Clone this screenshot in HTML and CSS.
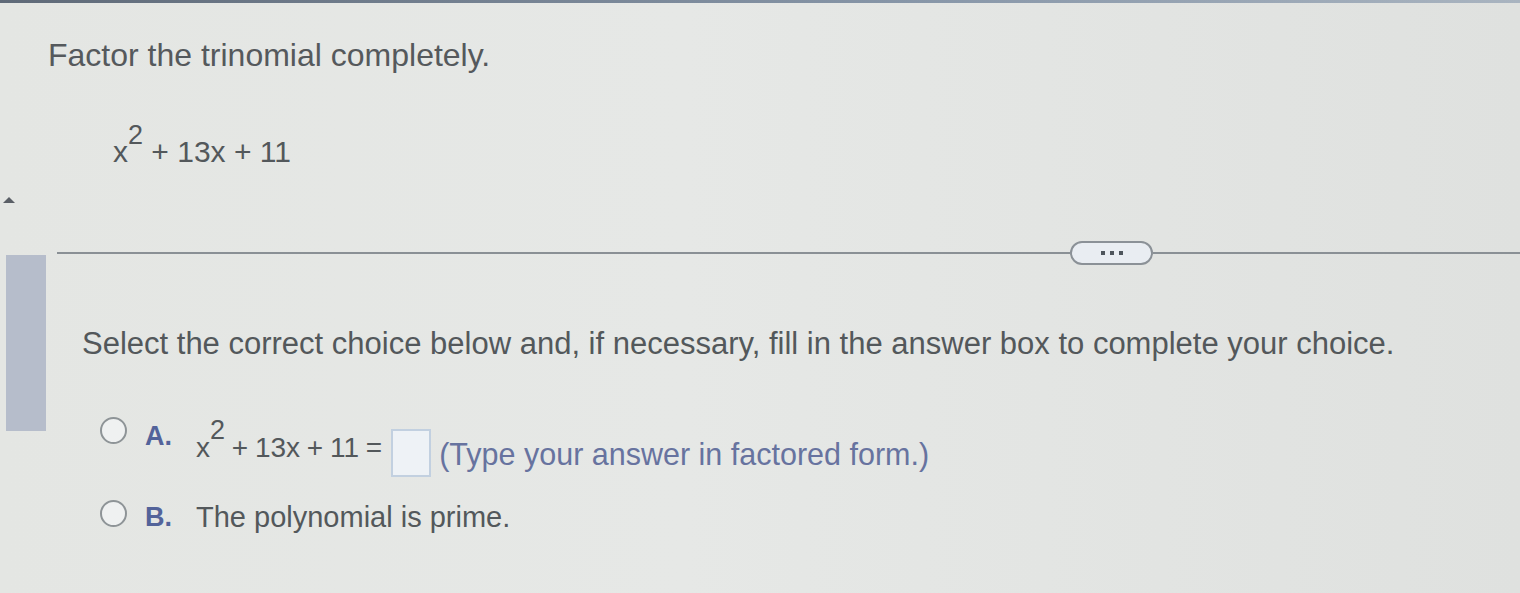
FILE: index.html
```html
<!DOCTYPE html>
<html lang="en">
<head>
<meta charset="utf-8">
<title>Factor the trinomial</title>
<link rel="stylesheet" href="styles.css">
</head>
<body>
<div class="topbar"></div>
<div class="layout">
  <aside class="rail">
    <div class="arrow"></div>
    <div class="thumb"></div>
  </aside>
  <main class="main">
    <section class="question">
      <h1 class="prompt">Factor the trinomial completely.</h1>
      <div class="expr-line">x<sup class="pow">2</sup> + 13x + 11</div>
    </section>
    <div class="divider">
      <span class="rule rule-left"></span>
      <button class="more" type="button"><span class="dot"></span><span class="dot"></span><span class="dot"></span></button>
      <span class="rule rule-right"></span>
    </div>
    <section class="answer">
      <p class="instr">Select the correct choice below and, if necessary, fill in the answer box to complete your choice.</p>
      <ul class="choices">
        <li class="choice choice-a">
          <span class="radio"></span>
          <span class="label">A.</span>
          <span class="content">
            <span class="eq">x<sup class="pow">2</sup> + 13x + 11 =</span>
            <span class="box"></span>
            <span class="hint">(Type your answer in factored form.)</span>
          </span>
        </li>
        <li class="choice choice-b">
          <span class="radio"></span>
          <span class="label">B.</span>
          <span class="text">The polynomial is prime.</span>
        </li>
      </ul>
    </section>
  </main>
</div>
</body>
</html>
```

FILE: styles.css
```css
html, body {
  margin: 0;
  height: 100%;
}
body {
  background: linear-gradient(90deg, #e4e6e3 0%, #e6e8e6 45%, #dfe1df 100%);
  font-family: "Liberation Sans", Arial, sans-serif;
  color: #53585b;
  overflow: hidden;
}
.topbar {
  height: 3px;
  background: linear-gradient(90deg, #5f6a78, #8796a8 60%, #a9b4c0);
}
.layout {
  display: flex;
}
.rail {
  width: 48px;
  flex: none;
  display: flex;
  flex-direction: column;
  padding-top: 194px;
}
.arrow {
  width: 0;
  height: 0;
  margin-left: 3px;
  border-left: 6px solid transparent;
  border-right: 6px solid transparent;
  border-bottom: 6px solid #5a5f66;
}
.thumb {
  margin-top: 52px;
  margin-left: 6px;
  width: 40px;
  height: 176px;
  background: #b6bdcb;
}
.main {
  flex: 1;
  padding-top: 34px;
}
.prompt {
  margin: 0;
  font-size: 32px;
  font-weight: 400;
  line-height: 36px;
  color: #55595c;
}
.expr-line {
  margin: 62px 0 0 65px;
  font-size: 30px;
  line-height: 34px;
  color: #53585b;
}
.pow {
  font-size: 27px;
  line-height: 0;
  vertical-align: 18px;
}
.divider {
  display: flex;
  align-items: center;
  margin: 72px 0 0 9px;
  height: 24px;
}
.rule {
  height: 2px;
  background: #8a9095;
}
.rule-left {
  width: 1013px;
  flex: none;
}
.rule-right {
  flex: 1;
}
.more {
  width: 83px;
  height: 24px;
  flex: none;
  box-sizing: border-box;
  border: 2px solid #8b9197;
  border-radius: 12px;
  background: #e9edf2;
  padding: 0;
  display: flex;
  align-items: center;
  justify-content: center;
  gap: 5px;
}
.dot {
  width: 4px;
  height: 4px;
  background: #4e555c;
}
.instr {
  margin: 62px 0 0 34px;
  font-size: 31px;
  line-height: 34px;
  color: #53585b;
}
.choices {
  list-style: none;
  margin: 52px 0 0 52px;
  padding: 0;
}
.choice {
  display: flex;
  align-items: flex-start;
}
.radio {
  flex: none;
  width: 27px;
  height: 27px;
  box-sizing: border-box;
  border: 2px solid #8e9497;
  border-radius: 50%;
  background: #eff1f1;
  margin-top: 4px;
}
.label {
  flex: none;
  font-size: 27px;
  font-weight: 700;
  line-height: 32px;
  color: #53639a;
  margin: 7px 0 0 18px;
}
.content {
  display: flex;
  align-items: flex-start;
  margin-left: 24px;
}
.eq {
  font-size: 28px;
  line-height: 34px;
  margin-top: 17px;
  color: #53585b;
  word-spacing: -1px;
}
.box {
  width: 40px;
  height: 48px;
  box-sizing: border-box;
  border: 2px solid #c2d0e0;
  background: #eef2f6;
  margin: 16px 8px 0 9px;
}
.hint {
  font-size: 30.5px;
  line-height: 32px;
  margin-top: 25px;
  color: #67739f;
}
.choice-b {
  margin-top: 20px;
}
.choice-b .radio {
  margin-top: 3px;
}
.choice-b .label {
  margin-top: 4px;
}
.text {
  font-size: 29px;
  line-height: 34px;
  margin: 3px 0 0 24px;
  color: #53585b;
}
```
